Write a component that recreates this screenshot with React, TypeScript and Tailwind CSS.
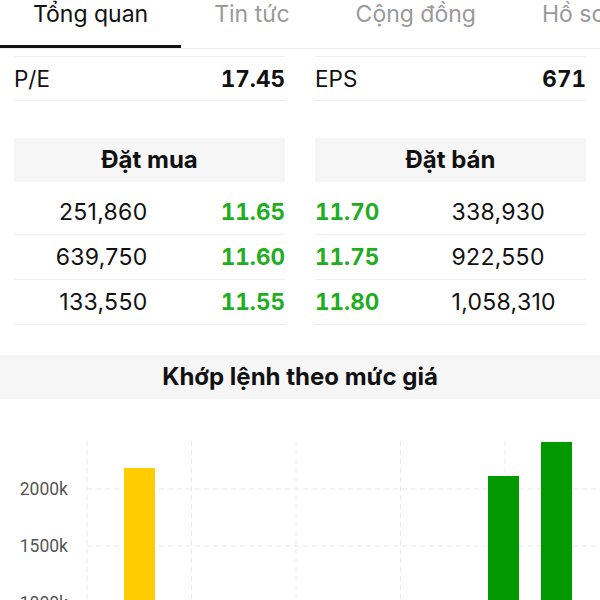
import React from 'react';

const tabs = ['Tổng quan', 'Tin tức', 'Cộng đồng', 'Hồ sơ'];

const buys = [
  { qty: '251,860', price: '11.65' },
  { qty: '639,750', price: '11.60' },
  { qty: '133,550', price: '11.55' },
];

const sells = [
  { qty: '338,930', price: '11.70' },
  { qty: '922,550', price: '11.75' },
  { qty: '1,058,310', price: '11.80' },
];

const gridX = [87, 191.5, 296, 400.5, 505];
const gridY = [
  { y: 90, label: '2000k' },
  { y: 147, label: '1500k' },
  { y: 204, label: '1000k' },
];

const bars = [
  { x: 124, top: 69, color: '#ffcc00' },
  { x: 488, top: 77, color: '#009a00' },
  { x: 541, top: 43, color: '#009a00' },
];

const PriceChart: React.FC = () => (
  <svg width="600" height="220" viewBox="0 0 600 220" className="block">
    {gridX.map((x) => (
      <line key={x} x1={x} y1={42} x2={x} y2={220} stroke="#e8e8e8" strokeWidth="1" strokeDasharray="5 4" />
    ))}
    {gridY.map((g) => (
      <g key={g.label}>
        <line x1={87} y1={g.y} x2={600} y2={g.y} stroke="#e8e8e8" strokeWidth="1" strokeDasharray="5 4" />
        <text x={68} y={g.y + 6} textAnchor="end" fontSize="17.5" fill="#555" fontFamily="Roboto, sans-serif">
          {g.label}
        </text>
      </g>
    ))}
    {bars.map((b) => (
      <rect key={b.x} x={b.x} y={b.top} width={31} height={220 - b.top} fill={b.color} />
    ))}
  </svg>
);

export default function App() {
  return (
    <div className="w-[600px] h-[600px] overflow-hidden bg-white text-[#111] font-['Inter','Liberation_Sans',sans-serif]">
      {/* tabs */}
      <div className="flex h-[49px] border-b border-[#efefef] whitespace-nowrap overflow-hidden">
        {tabs.map((t, i) => (
          <div key={t} className="relative px-[33px] shrink-0">
            <span className={`block text-[23px] leading-[28px] ${i === 0 ? 'text-[#111]' : 'text-[#9a9a9a]'}`}>{t}</span>
            {i === 0 && <div className="absolute left-0 right-0 top-[45px] h-[3px] bg-[#111]" />}
          </div>
        ))}
      </div>

      {/* P/E, EPS */}
      <div className="grid grid-cols-2 gap-[30px] px-[14px] mt-[7px] tabular-nums">
        <div className="flex items-center justify-between h-[45px] border-y border-[#f0f0f0] text-[22.5px]">
          <span>P/E</span>
          <span className="font-bold">17.45</span>
        </div>
        <div className="flex items-center justify-between h-[45px] border-y border-[#f0f0f0] text-[22.5px]">
          <span>EPS</span>
          <span className="font-bold">671</span>
        </div>
      </div>

      {/* order book */}
      <div className="grid grid-cols-2 gap-[30px] px-[14px] mt-[37px]">
        <div>
          <div className="h-[44px] bg-[#f6f6f6] flex items-center justify-center text-[24px] font-bold">Đặt mua</div>
          <div className="mt-[8px]">
            {buys.map((r) => (
              <div key={r.price} className="grid grid-cols-2 items-center h-[45px] border-b border-[#f0f0f0]">
                <span className="text-right pr-[2px] text-[23px] tracking-[0.3px]">{r.qty}</span>
                <span className="text-right font-bold text-[22.5px] tabular-nums text-[#1fae1f]">{r.price}</span>
              </div>
            ))}
          </div>
        </div>
        <div>
          <div className="h-[44px] bg-[#f6f6f6] flex items-center justify-center text-[24px] font-bold">Đặt bán</div>
          <div className="mt-[8px]">
            {sells.map((r) => (
              <div key={r.price} className="grid grid-cols-2 items-center h-[45px] border-b border-[#f0f0f0]">
                <span className="font-bold text-[22.5px] tabular-nums text-[#1fae1f]">{r.price}</span>
                <span className="pl-[1px] text-[23px] tracking-[0.3px]">{r.qty}</span>
              </div>
            ))}
          </div>
        </div>
      </div>

      {/* matched by price */}
      <div className="mt-[30px]">
        <div className="h-[44px] bg-[#f6f6f6] flex items-center justify-center text-[24px] font-bold">
          Khớp lệnh theo mức giá
        </div>
        <PriceChart />
      </div>
    </div>
  );
}
